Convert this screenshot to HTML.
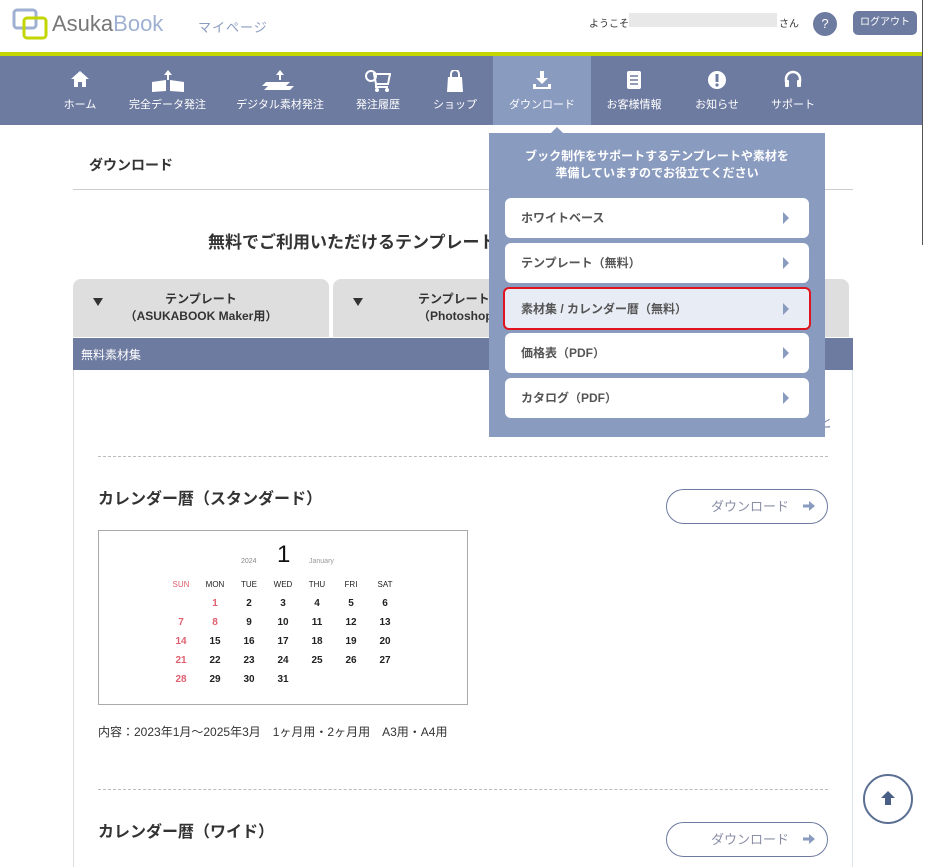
<!DOCTYPE html>
<html><head><meta charset="utf-8"><style>
*{box-sizing:border-box;margin:0;padding:0}
body{width:925px;height:867px;overflow:hidden;background:#fff;font-family:"Liberation Sans","Noto Sans CJK JP",sans-serif;color:#333;position:relative}
.abs{position:absolute}
.nav{top:56px;left:0;width:925px;height:69px;background:#6e7ba0}
.ni{position:absolute;top:0;height:69px;color:#fff;font-size:11px;text-align:center}
.ni svg{position:absolute;top:14px;left:50%;transform:translateX(-50%)}
.ni span{position:absolute;top:40px;left:0;right:0;white-space:nowrap}
.dd{left:489px;top:133px;width:336px;height:304px;background:#8a9bc0}
.mi{position:absolute;left:16px;width:304px;height:40px;background:#fff;border-radius:6px;font-size:12px;font-weight:bold;color:#555;padding:11px 0 0 16px}
.mi:after{content:"";position:absolute;right:20px;top:14px;border-left:6px solid #8a9bc0;border-top:6px solid transparent;border-bottom:6px solid transparent}
.btn{position:absolute;left:666px;width:162px;height:35px;border:1.5px solid #6e7ba0;border-radius:18px;color:#8a8fa6;font-size:13px;padding:6px 0 0 44px}
.btn svg{position:absolute;right:12px;top:11px}
.cal td{width:34px;text-align:center;font-size:10px;height:19px;font-weight:bold;color:#222}
.r{color:#e06070!important}
</style></head><body>
<svg class="abs" style="left:12px;top:8px" width="36" height="32" viewBox="0 0 36 32"><rect x="2" y="2" width="22" height="18" rx="3" fill="none" stroke="#9fb0d2" stroke-width="3"/><rect x="12" y="10" width="22" height="20" rx="3" fill="none" stroke="#c3d600" stroke-width="3"/></svg>
<div class="abs" style="left:52px;top:11px;font-size:22px;color:#777">Asuka<span style="color:#9fb0d2">Book</span></div>
<div class="abs" style="left:198px;top:17px;font-size:13px;color:#8a9bc0;letter-spacing:1px">マイページ</div>
<div class="abs" style="left:589px;top:15px;font-size:10px;color:#333">ようこそ</div>
<div class="abs" style="left:629px;top:13px;width:148px;height:14px;background:#e8e8e8"></div>
<div class="abs" style="left:779px;top:15px;font-size:10px;color:#333">さん</div>
<div class="abs" style="left:813px;top:12px;width:24px;height:24px;border-radius:12px;background:#6e7ba0;color:#fff;font-size:13px;text-align:center;line-height:24px">?</div>
<div class="abs" style="left:853px;top:11px;width:64px;height:24px;border-radius:5px;background:#6e7ba0;color:#fff;font-size:10px;text-align:center;line-height:24px">ログアウト</div>
<div class="abs" style="left:0;top:52px;width:925px;height:4px;background:#c3d600"></div>
<div class="abs nav">
<div class="ni" style="left:58px;width:44px"><svg width="20" height="18" viewBox="0 0 20 18"><path d="M10 1L1 9h3v8h4v-5h4v5h4V9h3z" fill="#fff"/></svg><span>ホーム</span></div>
<div class="ni" style="left:125px;width:85px"><svg width="36" height="22" viewBox="0 0 36 22"><path d="M18 0l-4 5h3v5h2V5h3z M2 12l14-2v11L2 22z M20 10l14 2v10l-14-1z" fill="#fff"/></svg><span>完全データ発注</span></div>
<div class="ni" style="left:232px;width:96px"><svg width="40" height="22" viewBox="0 0 40 22"><path d="M20 0l-4 5h3v5h2V5h3z M6 12h24l-4 4H2z M8 16h26l-4 4H4z" fill="#fff"/></svg><span>デジタル素材発注</span></div>
<div class="ni" style="left:350px;width:56px"><svg width="26" height="22" viewBox="0 0 26 22"><circle cx="6" cy="6" r="5" fill="none" stroke="#fff" stroke-width="2"/><path d="M9 4h16l-2 10H11z M11 14v3h12" fill="none" stroke="#fff" stroke-width="2"/><circle cx="12" cy="20" r="2" fill="#fff"/><circle cx="22" cy="20" r="2" fill="#fff"/></svg><span>発注履歴</span></div>
<div class="ni" style="left:428px;width:54px"><svg width="18" height="22" viewBox="0 0 18 22"><path d="M5 7V4a4 4 0 018 0v3" fill="none" stroke="#fff" stroke-width="2"/><path d="M2 7h14l1 15H1z" fill="#fff"/></svg><span>ショップ</span></div>
<div class="ni" style="left:493px;width:98px;background:#8a9bc0"><svg width="20" height="20" viewBox="0 0 20 20"><path d="M8 1h4v7h4l-6 6-6-6h4z M1 14h3v3h12v-3h3v5H1z" fill="#fff"/></svg><span>ダウンロード</span></div>
<div class="ni" style="left:603px;width:62px"><svg width="16" height="20" viewBox="0 0 16 20"><rect x="1" y="1" width="14" height="18" rx="2" fill="#fff"/><path d="M4 6h8M4 10h8M4 14h8" stroke="#6e7ba0" stroke-width="1.5"/></svg><span>お客様情報</span></div>
<div class="ni" style="left:690px;width:54px"><svg width="20" height="20" viewBox="0 0 20 20"><circle cx="10" cy="10" r="9" fill="#fff"/><path d="M10 4v8" stroke="#6e7ba0" stroke-width="3"/><circle cx="10" cy="15" r="1.6" fill="#6e7ba0"/></svg><span>お知らせ</span></div>
<div class="ni" style="left:766px;width:54px"><svg width="20" height="20" viewBox="0 0 20 20"><path d="M3 12V9a7 7 0 0114 0v3" fill="none" stroke="#fff" stroke-width="2.5"/><rect x="2" y="10" width="4" height="7" rx="1" fill="#fff"/><rect x="14" y="10" width="4" height="7" rx="1" fill="#fff"/></svg><span>サポート</span></div>
</div>
<div class="abs" style="left:89px;top:155px;font-size:14px;font-weight:bold;color:#333">ダウンロード</div>
<div class="abs" style="left:73px;top:189px;width:780px;height:1px;background:#ccc"></div>
<div class="abs" style="left:208px;top:228px;font-size:17px;font-weight:bold;color:#333;white-space:nowrap">無料でご利用いただけるテンプレート</div>
<div class="abs" style="left:73px;top:279px;width:256px;height:58px;background:#dedede;border-radius:8px 8px 0 0"></div>
<div class="abs" style="left:333px;top:279px;width:516px;height:58px;background:#dedede;border-radius:8px 8px 0 0"></div>
<div class="abs" style="left:93px;top:298px;border-top:8px solid #333;border-left:5px solid transparent;border-right:5px solid transparent"></div>
<div class="abs" style="left:353px;top:298px;border-top:8px solid #333;border-left:5px solid transparent;border-right:5px solid transparent"></div>
<div class="abs" style="left:100px;top:291px;width:202px;text-align:center;font-size:12px;font-weight:bold;line-height:17px;color:#333">テンプレート<br>（ASUKABOOK Maker用）</div>
<div class="abs" style="left:418px;top:291px;font-size:12px;font-weight:bold;line-height:17px;color:#333">テンプレート<br>（Photoshop用）</div>
<div class="abs" style="left:73px;top:338px;width:780px;height:32px;background:#6e7ba0;color:#fff;font-size:12px;padding:8px 0 0 8px">無料素材集</div>
<div class="abs" style="left:73px;top:370px;width:1px;height:497px;background:#ddd"></div>
<div class="abs" style="left:852px;top:370px;width:1px;height:497px;background:#dde3ec"></div>
<div class="abs" style="left:820px;top:414px;font-size:12px;color:#6e7ba0">と</div>
<div class="abs" style="left:98px;top:456px;width:730px;border-top:1px dashed #bbb"></div>
<div class="abs" style="left:98px;top:485px;font-size:16px;font-weight:bold;color:#333">カレンダー暦（スタンダード）</div>
<div class="btn" style="top:489px">ダウンロード<svg width="12" height="10" viewBox="0 0 12 10"><path d="M0 3.5h6V0l6 5-6 5V6.5H0z" fill="#8a9bc0"/></svg></div>
<div class="abs" style="left:98px;top:530px;width:370px;height:175px;border:1px solid #aaa;background:#fff">
<div class="abs" style="left:142px;top:27px;font-size:7px;color:#888">2024</div>
<div class="abs" style="left:178px;top:10px;font-size:24px;color:#111">1</div>
<div class="abs" style="left:210px;top:27px;font-size:7px;color:#999">January</div>
<table class="cal abs" style="left:65px;top:44px;border-collapse:collapse">
<tr><td class="r" style="font-size:8px;font-weight:normal">SUN</td><td style="font-size:8px;font-weight:normal">MON</td><td style="font-size:8px;font-weight:normal">TUE</td><td style="font-size:8px;font-weight:normal">WED</td><td style="font-size:8px;font-weight:normal">THU</td><td style="font-size:8px;font-weight:normal">FRI</td><td style="font-size:8px;font-weight:normal">SAT</td></tr>
<tr><td></td><td class="r">1</td><td>2</td><td>3</td><td>4</td><td>5</td><td>6</td></tr>
<tr><td class="r">7</td><td class="r">8</td><td>9</td><td>10</td><td>11</td><td>12</td><td>13</td></tr>
<tr><td class="r">14</td><td>15</td><td>16</td><td>17</td><td>18</td><td>19</td><td>20</td></tr>
<tr><td class="r">21</td><td>22</td><td>23</td><td>24</td><td>25</td><td>26</td><td>27</td></tr>
<tr><td class="r">28</td><td>29</td><td>30</td><td>31</td><td></td><td></td><td></td></tr>
</table></div>
<div class="abs" style="left:98px;top:723px;font-size:12px;color:#333;white-space:pre">内容：2023年1月～2025年3月　1ヶ月用・2ヶ月用　A3用・A4用</div>
<div class="abs" style="left:98px;top:789px;width:730px;border-top:1px dashed #bbb"></div>
<div class="abs" style="left:98px;top:818px;font-size:16px;font-weight:bold;color:#333">カレンダー暦（ワイド）</div>
<div class="btn" style="top:822px">ダウンロード<svg width="12" height="10" viewBox="0 0 12 10"><path d="M0 3.5h6V0l6 5-6 5V6.5H0z" fill="#8a9bc0"/></svg></div>
<div class="abs" style="left:863px;top:774px;width:50px;height:50px;border:2px solid #5a6f93;border-radius:25px;background:#fff"><svg class="abs" style="left:15px;top:14px" width="16" height="16" viewBox="0 0 16 16"><path d="M8 1l7 7h-4v7H5V8H1z" fill="#4a5f85"/></svg></div>
<div class="abs" style="left:551px;top:127px;border-bottom:6px solid #8a9bc0;border-left:6px solid transparent;border-right:6px solid transparent"></div>
<div class="abs dd">
<div class="abs" style="left:0;top:15px;width:336px;text-align:center;font-size:12px;font-weight:bold;color:#fff;line-height:17px">ブック制作をサポートするテンプレートや素材を<br>準備していますのでお役立てください</div>
<div class="mi" style="top:65px">ホワイトベース</div>
<div class="mi" style="top:110px">テンプレート（無料）</div>
<div class="mi" style="top:154px;background:#e8ecf4;border:2.5px solid #e0141e;left:14px;width:308px;height:43px;padding-left:16px">素材集 / カレンダー暦（無料）</div>
<div class="mi" style="top:200px">価格表（PDF）</div>
<div class="mi" style="top:245px">カタログ（PDF）</div>
</div>
<div class="abs" style="left:922px;top:0;width:3px;height:245px;background:#fff;border-left:1px solid #555"></div>
</body></html>
